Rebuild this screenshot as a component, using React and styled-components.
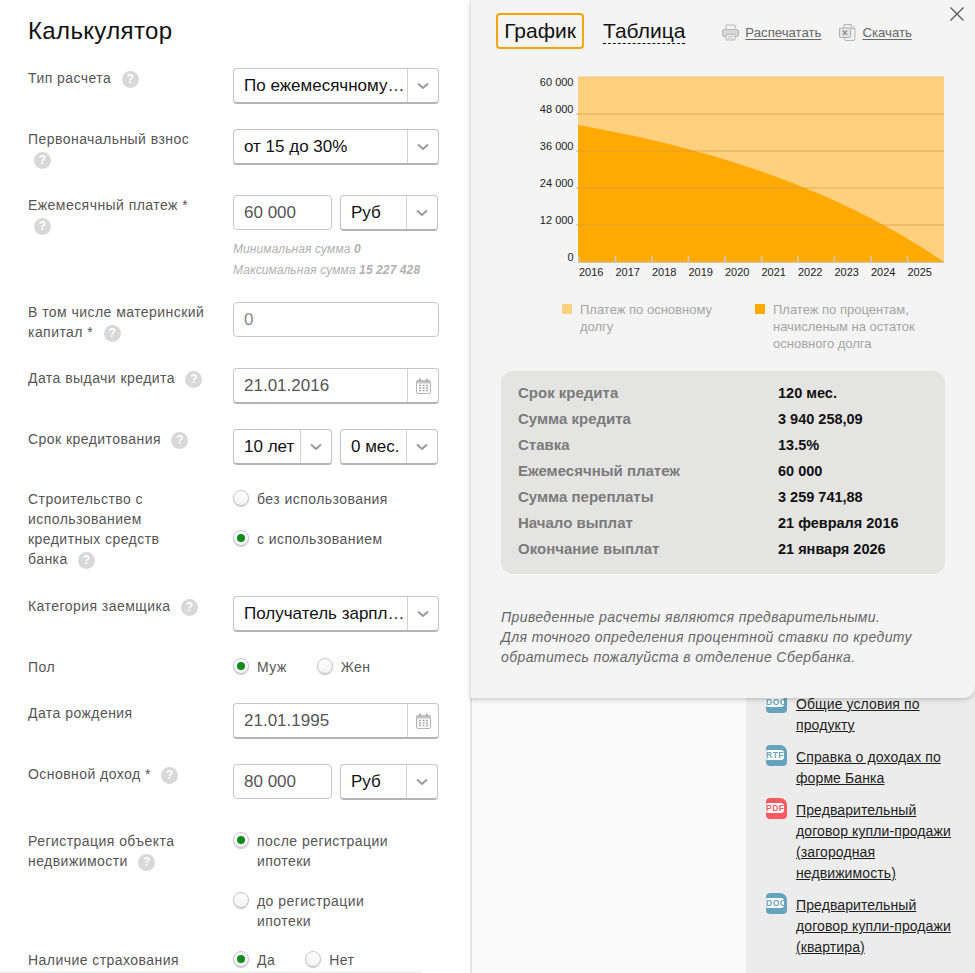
import React from "react";
import styled, { createGlobalStyle } from "styled-components";

const GlobalStyle = createGlobalStyle`
  html, body {
    margin: 0;
    padding: 0;
    background: #fafafa;
  }
  body {
    font-family: "Liberation Sans", Arial, sans-serif;
  }
`;

const years = ["2016", "2017", "2018", "2019", "2020", "2021", "2022", "2023", "2024", "2025"];
const yLabels = [
  ["60 000", 82],
  ["48 000", 109],
  ["36 000", 146],
  ["24 000", 183],
  ["12 000", 220],
  ["0", 257],
];
const summary = [
  ["Срок кредита", "120 мес."],
  ["Сумма кредита", "3 940 258,09"],
  ["Ставка", "13.5%"],
  ["Ежемесячный платеж", "60 000"],
  ["Сумма переплаты", "3 259 741,88"],
  ["Начало выплат", "21 февраля 2016"],
  ["Окончание выплат", "21 января 2026"],
];
const docs = [
  { type: "DOC", color: "#66a4bc", title: "Общие условия по продукту" },
  { type: "RTF", color: "#66a4bc", title: "Справка о доходах по форме Банка" },
  { type: "PDF", color: "#fb5a62", title: "Предварительный договор купли-продажи (загородная недвижимость)" },
  { type: "DOC", color: "#66a4bc", title: "Предварительный договор купли-продажи (квартира)" },
];

// доля процентов в аннуитетном платеже: кривая графика
const interestCurve = () => {
  const points = [];
  const q = 0.01119;
  for (let i = 0; i <= 60; i++) {
    const f = i / 60;
    const h = (137 * (1 - Math.exp(-q * 120 * (1 - f)))) / (1 - Math.exp(-q * 120));
    points.push(`${(578 + f * 366).toFixed(1)} ${(262 - h).toFixed(1)}`);
  }
  return `M${points.join(" L")} L578 262 Z`;
};

const Help = () => <HelpMark>?</HelpMark>;

const Chevron = () => (
  <svg width="12" height="8" viewBox="0 0 12 8">
    <path d="M1 1.5 L6 6 L11 1.5" fill="none" stroke="#9a9a9a" strokeWidth="2" />
  </svg>
);

const CalendarIcon = () => (
  <svg width="15" height="16" viewBox="0 0 15 16">
    <rect x="0.5" y="2.5" width="14" height="13" rx="1.5" fill="#fff" stroke="#b4b4b4" />
    <rect x="0.5" y="2.5" width="14" height="3" fill="#c4c4c4" />
    <rect x="3" y="0.5" width="2" height="3.5" fill="#b4b4b4" />
    <rect x="10" y="0.5" width="2" height="3.5" fill="#b4b4b4" />
    <path
      d="M3 7.5h2M6.5 7.5h2M10 7.5h2M3 10h2M6.5 10h2M10 10h2M3 12.5h2M6.5 12.5h2M10 12.5h2"
      stroke="#a8a8a8"
      strokeWidth="1.4"
    />
  </svg>
);

const PrintIcon = () => (
  <svg width="17" height="17" viewBox="0 0 17 17">
    <path d="M4 5V1h9v4" fill="#f4f4f4" stroke="#b8b8b8" />
    <rect x="0.5" y="5.5" width="16" height="7" rx="1.5" fill="#d6d6d6" stroke="#b8b8b8" />
    <path d="M4 10.5h9v5.5H4z" fill="#f4f4f4" stroke="#b8b8b8" />
    <path d="M5.5 12.5h6M5.5 14.3h6" stroke="#c8c8c8" />
  </svg>
);

const XlsIcon = () => (
  <svg width="17" height="17" viewBox="0 0 17 17">
    <path d="M5 0.5h7l4 4v10a2 2 0 0 1-2 2H7a2 2 0 0 1-2-2z" fill="#f0f0f0" stroke="#b8b8b8" />
    <path d="M12 0.5v4h4" fill="none" stroke="#b8b8b8" />
    <rect x="0.5" y="4" width="11" height="9.5" rx="1" fill="#e4e4e4" stroke="#b0b0b0" />
    <path d="M3.8 6.5l4.2 4.6M8 6.5l-4.2 4.6" stroke="#8a8a8a" strokeWidth="1.2" />
  </svg>
);

const Select = ({ value, width }) => (
  <SelectBox $width={width}>
    <SelectValue>{value}</SelectValue>
    <SelectSide>
      <Chevron />
    </SelectSide>
  </SelectBox>
);

const DateField = ({ value }) => (
  <SelectBox $width={206}>
    <DateValue>{value}</DateValue>
    <SelectSide>
      <CalendarIcon />
    </SelectSide>
  </SelectBox>
);

const Radio = ({ checked, children }) => (
  <RadioItem>
    <RadioCircle>{checked && <RadioDot />}</RadioCircle>
    <RadioText>{children}</RadioText>
  </RadioItem>
);

const Row = ({ label, help, after, children }) => (
  <FormRow $after={after}>
    <RowLabel>
      {label}
      {help && " "}
      {help && <Help />}
    </RowLabel>
    <RowControl>{children}</RowControl>
  </FormRow>
);

const Chart = () => (
  <ChartSvg width="505" height="210" viewBox="470 70 505 210">
    <rect x="578" y="77" width="366" height="185" fill="#ffd17f" />
    <path d="M578 77H944" stroke="#f2c675" strokeWidth="1" />
    <path d={interestCurve()} fill="#ffaa03" />
    {[114, 151, 188, 225].map((y) => (
      <path key={y} d={`M576 ${y}H944`} stroke="#c99a45" strokeOpacity="0.35" strokeWidth="2" />
    ))}
    <path d="M578 262H944" stroke="#d9b264" strokeWidth="1.5" />
    {years.map((year, i) => {
      const x = 579 + i * 36.5;
      return (
        <g key={year}>
          <path d={`M${x} 256V263`} stroke="#c8c8c0" strokeWidth="1.5" />
          <ChartText x={x} y="276">{year}</ChartText>
        </g>
      );
    })}
    {yLabels.map(([text, y]) => (
      <ChartText key={text} x="573.5" y={y + 4} textAnchor="end">{text}</ChartText>
    ))}
  </ChartSvg>
);

export default function App() {
  return (
    <>
      <GlobalStyle />
      <Page>
        <Calc>
          <Title>Калькулятор</Title>
          <Row label="Тип расчета" help after={25}>
            <Select value={"По ежемесячному\u00a0платежу"} width={206} />
          </Row>
          <Row label="Первоначальный взнос" help after={26}>
            <Select value="от 15 до 30%" width={206} />
          </Row>
          <Row label="Ежемесячный платеж *" help after={21}>
            <Pair>
              <TextInput>60 000</TextInput>
              <Select value="Руб" width={98} />
            </Pair>
            <Hint>Минимальная сумма <b>0</b></Hint>
            <Hint>Максимальная сумма <b>15 227 428</b></Hint>
          </Row>
          <Row label="В том числе материнский капитал *" help after={26}>
            <WideInput>0</WideInput>
          </Row>
          <Row label="Дата выдачи кредита" help after={25}>
            <DateField value="21.01.2016" />
          </Row>
          <Row label="Срок кредитования" help after={24}>
            <Pair>
              <Select value="10 лет" width={99} />
              <Select value="0 мес." width={98} />
            </Pair>
          </Row>
          <Row label={"Строительство с использованием кредитных средств\nбанка"} help after={27}>
            <RadioStack>
              <Radio>без использования</Radio>
              <Radio checked>с использованием</Radio>
            </RadioStack>
          </Row>
          <Row label="Категория заемщика" help after={25}>
            <Select value="Получатель зарплаты на счет в банке" width={206} />
          </Row>
          <Row label="Пол" after={26}>
            <RadioLine>
              <Radio checked>Муж</Radio>
              <Radio>Жен</Radio>
            </RadioLine>
          </Row>
          <Row label="Дата рождения" after={25}>
            <DateField value="21.01.1995" />
          </Row>
          <Row label="Основной доход *" help after={31}>
            <Pair>
              <TextInput>80 000</TextInput>
              <Select value="Руб" width={98} />
            </Pair>
          </Row>
          <Row label="Регистрация объекта недвижимости" help after={19}>
            <RadioStack>
              <Radio checked>после регистрации ипотеки</Radio>
              <Radio>до регистрации ипотеки</Radio>
            </RadioStack>
          </Row>
          <Row label="Наличие страхования" after={0}>
            <RadioLine>
              <Radio checked>Да</Radio>
              <Radio>Нет</Radio>
            </RadioLine>
          </Row>
          <BottomStrip />
        </Calc>

        <Behind>
          <Blank />
          <DocsColumn>
            {docs.map((doc) => (
              <DocItem key={doc.title}>
                <DocIcon $color={doc.color}>
                  <DocType $color={doc.color}>{doc.type}</DocType>
                </DocIcon>
                <DocLink>{doc.title}</DocLink>
              </DocItem>
            ))}
          </DocsColumn>

          <Modal>
            <CloseBtn aria-label="Закрыть">
              <svg width="14" height="14" viewBox="0 0 14 14">
                <path d="M0.5 0.5 L13.5 13.5 M13.5 0.5 L0.5 13.5" stroke="#555" strokeWidth="1.2" />
              </svg>
            </CloseBtn>
            <Tabs>
              <ActiveTab>График</ActiveTab>
              <DashTab>Таблица</DashTab>
              <ToolLink $left={37}><PrintIcon /><u>Распечатать</u></ToolLink>
              <ToolLink $left={18}><XlsIcon /><u>Скачать</u></ToolLink>
            </Tabs>
            <Chart />
            <Legend>
              <LegendItem $width={193}>
                <Swatch $color="#ffd17f" />
                <span>Платеж по основному долгу</span>
              </LegendItem>
              <LegendItem $width={170}>
                <Swatch $color="#ffaa03" />
                <span>Платеж по процентам, начисленым на остаток основного долга</span>
              </LegendItem>
            </Legend>
            <Summary>
              {summary.map(([name, value]) => (
                <SummaryRow key={name}>
                  <SummaryName>{name}</SummaryName>
                  <SummaryValue>{value}</SummaryValue>
                </SummaryRow>
              ))}
            </Summary>
            <Note>
              Приведенные расчеты являются предварительными.<br />
              Для точного определения процентной ставки по кредиту<br />
              обратитесь пожалуйста в отделение Сбербанка.
            </Note>
          </Modal>
        </Behind>
      </Page>
    </>
  );
}

const Page = styled.div`
  display: flex;
  width: 975px;
  height: 973px;
  overflow: hidden;
`;

const Calc = styled.div`
  position: relative;
  box-sizing: border-box;
  width: 470px;
  height: 973px;
  flex: none;
  padding: 17px 31px 0 28px;
  background: #fff;
  overflow: hidden;
`;

const BottomStrip = styled.div`
  position: absolute;
  left: 0;
  bottom: 0;
  width: 422px;
  height: 2px;
  background: #f4f4f4;
`;

const Title = styled.h1`
  margin: 0 0 24px;
  font-size: 24px;
  line-height: 27px;
  font-weight: 400;
  letter-spacing: 0.35px;
  color: #111;
`;

const FormRow = styled.div`
  display: grid;
  grid-template-columns: 205px 206px;
  margin-bottom: ${(p) => p.$after}px;
`;

const RowLabel = styled.div`
  box-sizing: border-box;
  padding-right: 25px;
  font-size: 14px;
  line-height: 20px;
  letter-spacing: 0.45px;
  color: #555;
  white-space: pre-line;
`;

const HelpMark = styled.span`
  display: inline-block;
  width: 17px;
  height: 17px;
  margin-left: 6px;
  border-radius: 50%;
  background: #d8d8d8;
  color: #fff;
  font-size: 12px;
  line-height: 17px;
  font-weight: 700;
  letter-spacing: 0;
  text-align: center;
  vertical-align: 0;
`;

const RowControl = styled.div`
  min-width: 0;
`;

const SelectBox = styled.div`
  box-sizing: border-box;
  display: flex;
  width: ${(p) => p.$width}px;
  height: 36px;
  flex: none;
  background: #fff;
  border: 1px solid #c4c4c4;
  border-bottom: 2px solid #b4b4b4;
  border-radius: 4px;
`;

const SelectValue = styled.div`
  flex: 1;
  min-width: 0;
  padding: 0 0 0 10px;
  font-size: 17px;
  line-height: 33px;
  color: #111;
  white-space: nowrap;
  overflow: hidden;
  text-overflow: ellipsis;
`;

const DateValue = styled(SelectValue)`
  color: #555;
`;

const SelectSide = styled.div`
  box-sizing: border-box;
  display: flex;
  align-items: center;
  justify-content: center;
  width: 31px;
  flex: none;
  border-left: 1px solid #d2d2d2;
`;

const Pair = styled.div`
  display: flex;
  gap: 8px;
`;

const TextInput = styled.div`
  box-sizing: border-box;
  width: 99px;
  height: 35px;
  flex: none;
  padding-left: 10px;
  background: #fff;
  border: 1px solid #c8c8c8;
  border-radius: 4px;
  font-size: 17px;
  line-height: 33px;
  color: #555;
`;

const WideInput = styled(TextInput)`
  width: 206px;
  color: #888;
`;

const Hint = styled.div`
  font-size: 12px;
  line-height: 21px;
  font-style: italic;
  letter-spacing: 0.1px;
  color: #b0b0b0;

  &:nth-child(2) {
    margin-top: 8px;
  }

  b {
    font-weight: 700;
  }
`;

const RadioStack = styled.div`
  display: flex;
  flex-direction: column;
  gap: 20px;
`;

const RadioLine = styled.div`
  display: flex;
  gap: 30px;
`;

const RadioItem = styled.div`
  display: flex;
  gap: 8px;
  font-size: 14px;
  line-height: 20px;
  letter-spacing: 0.45px;
  color: #555;
`;

const RadioText = styled.span`
  max-width: 150px;
`;

const RadioCircle = styled.span`
  box-sizing: border-box;
  display: flex;
  align-items: center;
  justify-content: center;
  width: 16px;
  height: 16px;
  flex: none;
  margin-top: 1px;
  border: 1px solid #c6c6c6;
  border-radius: 50%;
  background: linear-gradient(#fff, #f2f2f2);
  box-shadow: 0 1px 1px rgba(0, 0, 0, 0.22);
`;

const RadioDot = styled.span`
  width: 8px;
  height: 8px;
  border-radius: 50%;
  background: #138a1f;
`;

const Behind = styled.div`
  position: relative;
  display: flex;
  flex: 1;
  min-width: 0;
  border-left: 2px solid #e2e2e2;
`;

const Blank = styled.div`
  flex: 1;
  background: #fafafa;
`;

const DocsColumn = styled.div`
  box-sizing: border-box;
  width: 229px;
  flex: none;
  padding: 694px 20px 0 20px;
  background: #ececec;
`;

const DocItem = styled.div`
  display: flex;
  gap: 9px;
  margin-bottom: 11px;
`;

const DocIcon = styled.div`
  display: flex;
  align-items: center;
  width: 21px;
  height: 21px;
  flex: none;
  margin-top: -2px;
  border-radius: 4px 7px 4px 4px;
  background: ${(p) => p.$color};
`;

const DocType = styled.span`
  box-sizing: border-box;
  width: 18px;
  height: 10px;
  margin-top: -1px;
  border-radius: 2px 3px 3px 2px;
  background: #fff;
  color: ${(p) => p.$color};
  font-size: 8.5px;
  line-height: 10px;
  font-weight: 700;
  letter-spacing: 0.5px;
  text-align: center;
  white-space: nowrap;
  overflow: hidden;
`;

const DocLink = styled.a`
  font-size: 14px;
  line-height: 21px;
  letter-spacing: 0.1px;
  color: #1d1d1d;
  text-decoration: underline;
`;

const Modal = styled.div`
  position: absolute;
  left: -2px;
  top: 0;
  box-sizing: border-box;
  width: 505px;
  height: 698px;
  padding: 13px 30px 0 25px;
  background: #f4f4f4;
  border-left: 1px solid #e4e4e4;
  border-radius: 0 0 12px 0;
  box-shadow: 0 2px 4px rgba(0, 0, 0, 0.18);
`;

const CloseBtn = styled.button`
  position: absolute;
  top: 7px;
  right: 11px;
  display: flex;
  padding: 0;
  border: 0;
  background: none;
`;

const Tabs = styled.div`
  display: flex;
  align-items: flex-start;
`;

const ActiveTab = styled.div`
  box-sizing: border-box;
  width: 88px;
  height: 36px;
  border: 2px solid #f2a60c;
  border-radius: 4px;
  font-size: 21px;
  line-height: 32px;
  text-align: center;
  color: #111;
`;

const DashTab = styled.div`
  margin: 6px 0 0 19px;
  height: 24px;
  font-size: 21px;
  line-height: 24px;
  color: #111;
  border-bottom: 1px dashed #111;
`;

const ToolLink = styled.div`
  display: flex;
  align-items: center;
  gap: 6px;
  height: 20px;
  margin: 9px 0 0 ${(p) => p.$left}px;
  font-size: 13.2px;
  color: #666;

  u {
    text-underline-offset: 2px;
  }
`;

const ChartSvg = styled.svg`
  display: block;
  margin: 21px 0 0 -26px;
`;

const ChartText = styled.text`
  font-family: "Liberation Sans", Arial, sans-serif;
  font-size: 11px;
  fill: #222;
`;

const Legend = styled.div`
  display: flex;
  margin: 21px 0 0 66px;
`;

const LegendItem = styled.div`
  display: flex;
  gap: 8px;
  width: ${(p) => p.$width}px;
  font-size: 13px;
  line-height: 17px;
  color: #a4a4a4;

  span:last-child {
    max-width: 150px;
  }
`;

const Swatch = styled.span`
  width: 10px;
  height: 10px;
  flex: none;
  margin-top: 3px;
  background: ${(p) => p.$color};
`;

const Summary = styled.div`
  box-sizing: border-box;
  width: 444px;
  height: 203px;
  margin: 19px 0 0 5px;
  padding: 9px 17px;
  border-radius: 12px;
  background: #e4e5e3;
`;

const SummaryRow = styled.div`
  display: flex;
  align-items: baseline;
  line-height: 26px;
  font-weight: 700;
`;

const SummaryName = styled.span`
  width: 260px;
  font-size: 15px;
  color: #7b7b7b;
`;

const SummaryValue = styled.span`
  font-size: 14.5px;
  color: #111;
`;

const Note = styled.p`
  margin: 33px 0 0 5px;
  font-size: 14px;
  line-height: 20px;
  font-style: italic;
  letter-spacing: 0.4px;
  color: #666;
`;
